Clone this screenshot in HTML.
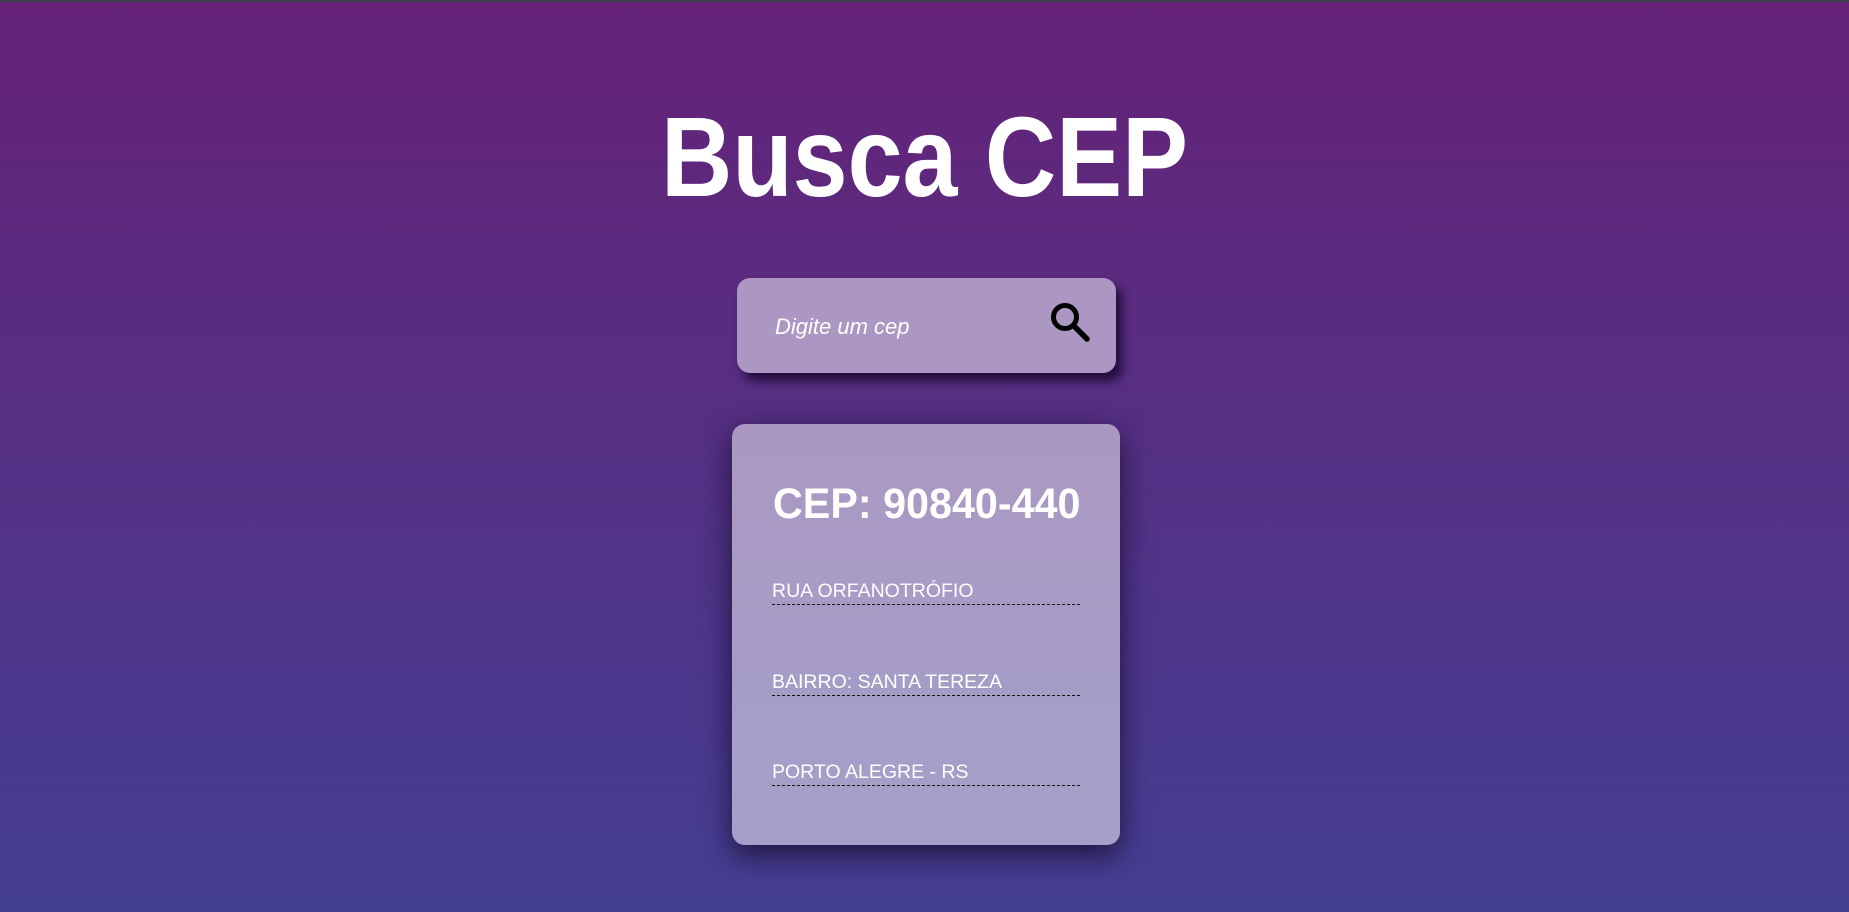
<!DOCTYPE html>
<html><head><meta charset="utf-8"><style>
html,body{margin:0;padding:0;width:1849px;height:912px;overflow:hidden}
body{background:linear-gradient(to bottom,#652277 0%,#443f93 100%);font-family:"Liberation Sans",sans-serif;position:relative;border-top:2px solid #3a3f4a;box-sizing:border-box}
.title{position:absolute;left:0;width:1849px;top:90px;text-align:center;color:#fff;font-weight:bold;font-size:113px;line-height:130px;transform:scaleX(0.874);white-space:nowrap}
.search{position:absolute;left:737px;top:276px;width:379px;height:95px;background:#ab97c1;border-radius:13px;box-shadow:6px 8px 10px rgba(20,5,40,.8)}
.ph{position:absolute;left:38px;top:36px;color:#fff;font-style:italic;font-size:22px;line-height:26px}
.icon{position:absolute;left:314px;top:25px}
.card{position:absolute;left:732px;top:422px;width:388px;height:421px;background:linear-gradient(#aa98c2,#a4a0c9);border-radius:13px;box-shadow:0 10px 30px rgba(20,10,40,.8)}
.cep{position:absolute;left:41px;top:55px;color:#fff;font-weight:bold;font-size:43px;line-height:50px;white-space:nowrap;transform:scaleX(0.96);transform-origin:left}
.line{position:absolute;left:40px;width:308px;color:#fff;font-size:19.5px;line-height:22px;border-bottom:1px dashed #111;padding-bottom:2px;white-space:nowrap}
</style></head><body>
<div class="title">Busca CEP</div>
<div class="search"><div class="ph">Digite um cep</div>
<svg class="icon" width="42" height="44" viewBox="0 0 42 44"><circle cx="14" cy="14" r="11.5" fill="none" stroke="#000" stroke-width="5"/><line x1="23" y1="23" x2="36" y2="36" stroke="#000" stroke-width="5.5" stroke-linecap="round"/></svg>
</div>
<div class="card">
<div class="cep">CEP: 90840-440</div>
<div class="line" style="top:156px">RUA ORFANOTRÓFIO</div>
<div class="line" style="top:247px">BAIRRO: SANTA TEREZA</div>
<div class="line" style="top:337px">PORTO ALEGRE - RS</div>
</div>
</body></html>
